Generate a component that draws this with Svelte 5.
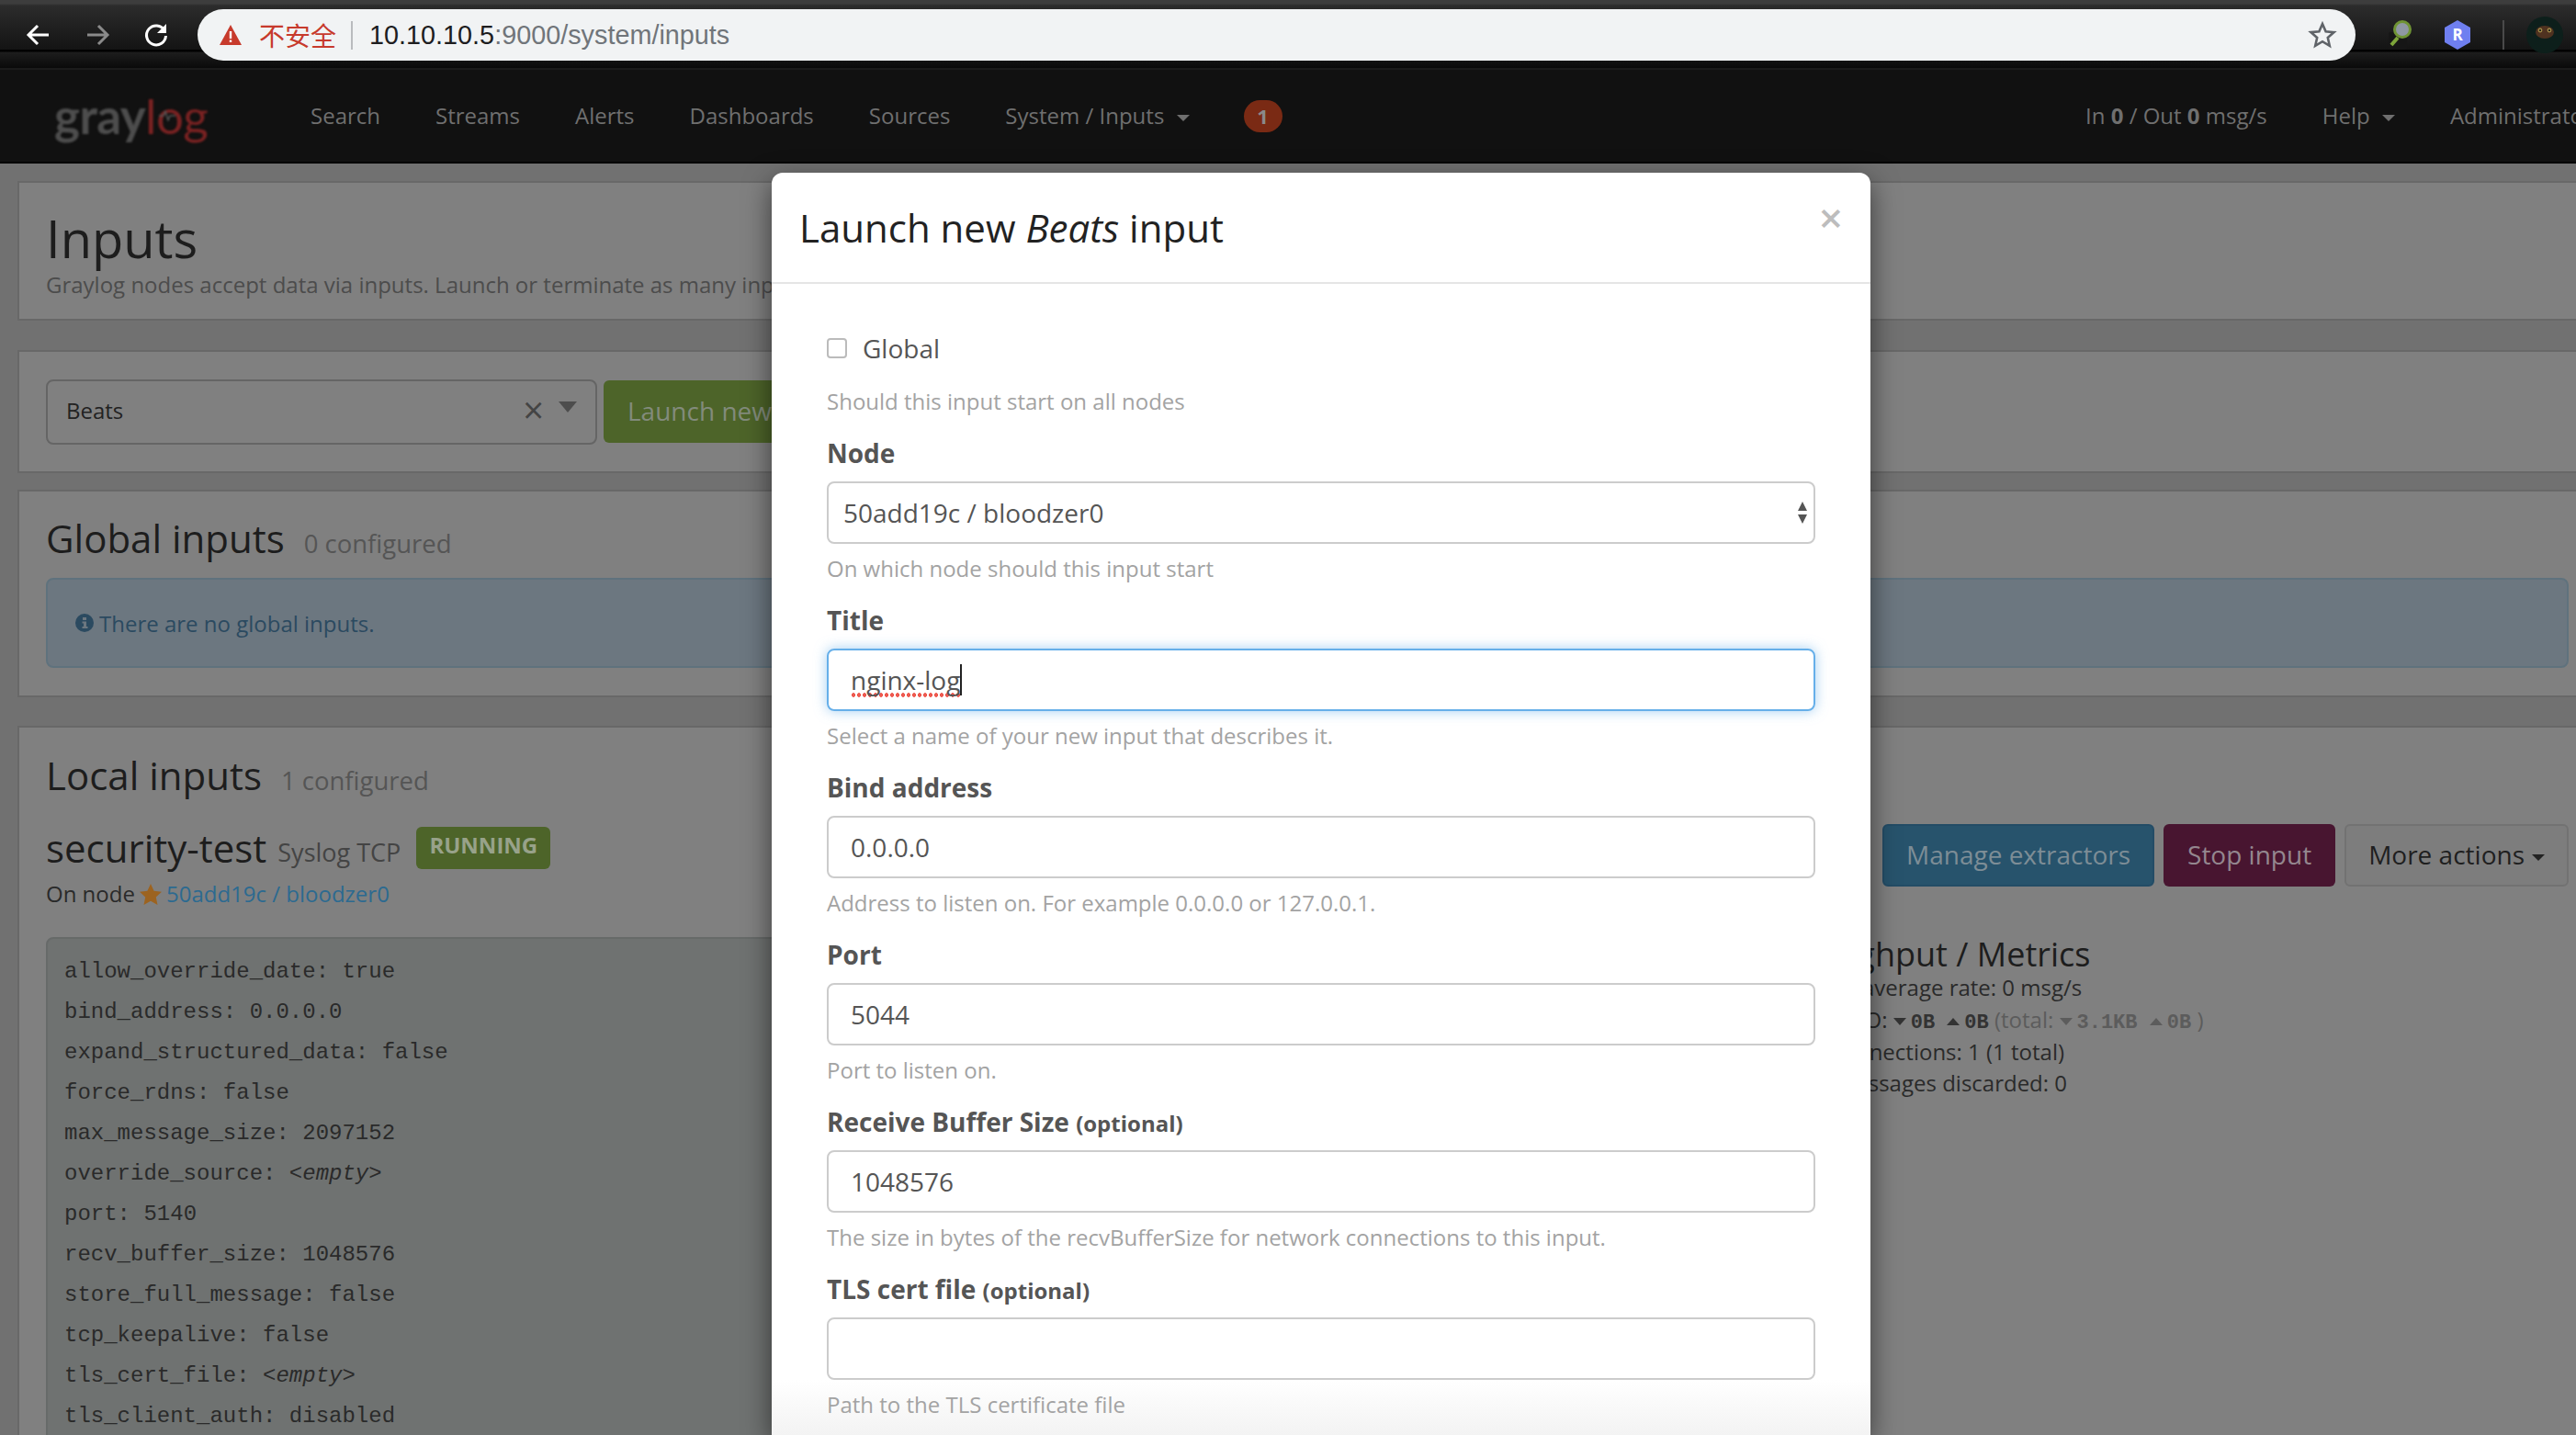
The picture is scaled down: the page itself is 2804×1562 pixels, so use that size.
<script>
  const navItems = ['Search', 'Streams', 'Alerts', 'Dashboards', 'Sources'];

  const fields = [
    { label: 'Bind address', value: '0.0.0.0', help: 'Address to listen on. For example 0.0.0.0 or 127.0.0.1.' },
    { label: 'Port', value: '5044', help: 'Port to listen on.' },
    { label: 'Receive Buffer Size', optional: true, value: '1048576', help: 'The size in bytes of the recvBufferSize for network connections to this input.' },
    { label: 'TLS cert file', optional: true, value: '', help: 'Path to the TLS certificate file' }
  ];

  const config = [
    ['allow_override_date', 'true'],
    ['bind_address', '0.0.0.0'],
    ['expand_structured_data', 'false'],
    ['force_rdns', 'false'],
    ['max_message_size', '2097152'],
    ['override_source', null],
    ['port', '5140'],
    ['recv_buffer_size', '1048576'],
    ['store_full_message', 'false'],
    ['tcp_keepalive', 'false'],
    ['tls_cert_file', null],
    ['tls_client_auth', 'disabled']
  ];
</script>

<div class="browser">
  <header class="chrome">
    <div class="nav-buttons">
      <svg width="30" height="30" viewBox="0 0 30 30"><path d="M26 15H5M14 5L4 15l10 10" fill="none" stroke="#fff" stroke-width="3" /></svg>
      <svg width="30" height="30" viewBox="0 0 30 30"><path d="M4 15h21M16 5l10 10-10 10" fill="none" stroke="#8a8a8a" stroke-width="3" /></svg>
      <svg width="30" height="30" viewBox="0 0 30 30"><path d="M24 10a10.500 10.500 0 1 0 1.500 6" fill="none" stroke="#fff" stroke-width="3" /><path d="M26 3v10H16z" fill="#fff" /></svg>
    </div>
    <div class="omnibox">
      <svg class="warn" width="26" height="24" viewBox="0 0 26 24"><path d="M13 1L25 23H1z" fill="#c73a2c" /><path d="M11.800 8h2.400v8h-2.400zM11.800 17.500h2.400v2.600h-2.400z" fill="#fff" /></svg>
      <span class="insecure">不安全</span>
      <span class="sep"></span>
      <span class="url"><b>10.10.10.5</b>:9000/system/inputs</span>
      <svg class="bookmark" width="32" height="32" viewBox="0 0 32 32"><path d="M16 4l3.600 8.300 9 .8-6.800 5.900 2 8.800L16 23.200 8.200 27.800l2-8.800-6.800-5.900 9-.8z" fill="none" stroke="#5f6368" stroke-width="2.600" /></svg>
    </div>
    <div class="extensions">
      <svg width="28" height="34" viewBox="0 0 28 34">
        <rect x="2" y="14" width="20" height="19" rx="2" fill="#161616" />
        <path d="M12 20l-7 8" stroke="#7da53a" stroke-width="4" />
        <circle cx="17" cy="11" r="8.500" fill="#8f98a3" stroke="#6f9434" stroke-width="3" />
      </svg>
      <svg width="30" height="34" viewBox="0 0 30 34"><path d="M15 1l14 8v16l-14 8-14-8V9z" fill="#6f7ff0" /><text x="15" y="23" text-anchor="middle" class="hex-letter">R</text></svg>
      <span class="ext-sep"></span>
      <svg width="40" height="40" viewBox="0 0 40 40">
        <circle cx="20" cy="20" r="20" fill="#0d1f1b" />
        <ellipse cx="20" cy="17" rx="10" ry="7" fill="#4f3220" />
        <circle cx="15" cy="15" r="2.400" fill="#a08a48" />
        <circle cx="25" cy="15" r="2.400" fill="#a08a48" />
        <circle cx="15" cy="15" r="1.100" fill="#111" />
        <circle cx="25" cy="15" r="1.100" fill="#111" />
      </svg>
    </div>
  </header>

  <div class="page">
    <nav class="navbar">
      <div class="logo">
        <span class="gray">gray</span><span class="log">log</span>
        <svg class="pulse" width="18" height="12" viewBox="0 0 18 12"><path d="M0 6h5l2-5 3 10 2-5h6" fill="none" stroke="#555" stroke-width="1.500" /></svg>
      </div>
      <ul class="nav-links">
        {#each navItems as item}
          <li>{item}</li>
        {/each}
        <li>System / Inputs <span class="caret"></span></li>
        <li><span class="badge">1</span></li>
      </ul>
      <ul class="nav-right">
        <li>In <b>0</b> / Out <b>0</b> msg/s</li>
        <li>Help <span class="caret"></span></li>
        <li>Administrator <span class="caret"></span></li>
      </ul>
    </nav>

    <main class="content">
      <section class="panel intro">
        <h1>Inputs</h1>
        <p>Graylog nodes accept data via inputs. Launch or terminate as many inputs as you want here.</p>
      </section>

      <section class="panel launcher">
        <div class="type-select">
          <span>Beats</span>
          <span class="clear">×</span>
          <span class="arrow"></span>
        </div>
        <button class="btn green">Launch new input</button>
      </section>

      <section class="panel global">
        <h2>Global inputs <small>0 configured</small></h2>
        <div class="alert">
          <svg width="20" height="20" viewBox="0 0 20 20"><circle cx="10" cy="10" r="10" fill="#2b4a60" /><path d="M8 4h4v3H8zM7.500 8.500H12V14h1.500v2h-6v-2H9v-3.500H7.500z" fill="#6c7780" /></svg>
          There are no global inputs.
        </div>
      </section>

      <section class="panel local">
        <h2>Local inputs <small>1 configured</small></h2>
        <div class="input-head">
          <div>
            <div class="input-title">
              <h3>security-test</h3>
              <span class="kind">Syslog TCP</span>
              <span class="label-running">RUNNING</span>
            </div>
            <div class="on-node">
              On node
              <svg width="24" height="23" viewBox="0 0 24 23"><path d="M12 0l3.600 7.800 8.400 1-6.200 5.800 1.700 8.400L12 18.800 4.500 23l1.700-8.400L0 8.800l8.400-1z" fill="#9c6320" /></svg>
              <a href="#top">50add19c / bloodzer0</a>
            </div>
          </div>
          <div class="actions">
            <button class="btn blue">Manage extractors</button>
            <button class="btn purple">Stop input</button>
            <button class="btn plain">More actions<span class="caret dark"></span></button>
          </div>
        </div>
        <div class="details">
          <div class="config">
            {#each config as [key, value]}
              <div class="config-line">{key}: {#if value}{value}{:else}<em>&lt;empty&gt;</em>{/if}</div>
            {/each}
          </div>
          <div class="metrics">
            <h3>Throughput / Metrics</h3>
            <ul>
              <li>1 minute average rate: 0 msg/s</li>
              <li>
                Network IO:
                <span class="mono"><i class="tri down"></i>0B <i class="tri up"></i>0B</span>
                <span class="total">(total: <span class="mono"><i class="tri down"></i>3.1KB <i class="tri up"></i>0B</span> )</span>
              </li>
              <li>Active connections: 1 (1 total)</li>
              <li>Empty messages discarded: 0</li>
            </ul>
          </div>
        </div>
      </section>
    </main>

    <div class="modal">
      <div class="modal-header">
        <h4>Launch new <em>Beats</em> input</h4>
        <span class="close">×</span>
      </div>
      <div class="modal-body">
        <div class="group">
          <label class="check"><span class="box"></span>Global</label>
          <p class="help">Should this input start on all nodes</p>
        </div>
        <div class="group">
          <div class="field-label">Node</div>
          <div class="control select">
            50add19c / bloodzer0
            <svg width="12" height="26" viewBox="0 0 12 26"><path d="M6 1l5 10H1zM6 25L1 15h10z" fill="#555" /></svg>
          </div>
          <p class="help">On which node should this input start</p>
        </div>
        <div class="group">
          <div class="field-label">Title</div>
          <div class="control focused"><span class="misspelled">nginx-log</span><span class="cursor"></span></div>
          <p class="help">Select a name of your new input that describes it.</p>
        </div>
        {#each fields as field}
          <div class="group">
            <div class="field-label">{field.label}{#if field.optional}&nbsp;<small>(optional)</small>{/if}</div>
            <div class="control">{field.value}</div>
            <p class="help">{field.help}</p>
          </div>
        {/each}
      </div>
    </div>
  </div>
</div>

<style>
  :global(body) {
    margin: 0;
    background: #717171;
  }

  .browser {
    width: 2804px;
    height: 1562px;
    display: flex;
    flex-direction: column;
    overflow: hidden;
    font-family: "Open Sans", sans-serif;
  }

  .chrome {
    flex: none;
    height: 75px;
    box-sizing: border-box;
    display: flex;
    align-items: flex-start;
    padding-top: 10px;
    background: linear-gradient(#3d3d3d 0, #3d3d3d 4px, #2c2c2c 6px, #141414 54px, #000 54px, #000 56px, #1d1d1d 57px, #0a0a0a 74px, #1b1b1b 74px);
  }

  .nav-buttons {
    width: 215px;
    height: 56px;
    box-sizing: border-box;
    padding-left: 27px;
    display: flex;
    align-items: center;
    gap: 34px;
  }

  .omnibox {
    width: 2349px;
    height: 56px;
    box-sizing: border-box;
    padding: 0 20px 0 23px;
    display: flex;
    align-items: center;
    background: #f1f3f4;
    border-radius: 28px;
  }

  .insecure {
    margin-left: 18px;
    color: #c73a2c;
    font: 28px "Noto Sans CJK SC", sans-serif;
  }

  .sep {
    width: 2px;
    height: 31px;
    margin: 0 18px 0 16px;
    background: #b9bbbe;
  }

  .url {
    flex: 1;
    color: #70757a;
    font: 28.800px "Liberation Sans", sans-serif;
  }

  .url b {
    color: #1d1d1f;
    font-weight: 400;
  }

  .extensions {
    flex: 1;
    height: 56px;
    display: flex;
    align-items: center;
    padding-left: 34px;
    gap: 34px;
  }

  .hex-letter {
    font: 700 17px "Open Sans", sans-serif;
    fill: #fff;
  }

  .ext-sep {
    width: 2px;
    height: 32px;
    margin-right: -10px;
    background: #4a4a4a;
  }

  .page {
    position: relative;
    flex: 1;
    min-height: 0;
    overflow: hidden;
    background: #717171;
  }

  .navbar {
    height: 98px;
    padding-bottom: 2px;
    width: 2900px;
    display: flex;
    align-items: center;
    background: #111;
    border-top: 1px solid #1b1b1b;
    border-bottom: 2px solid #000;
    color: #6f6f6f;
    font-size: 24px;
  }

  .logo {
    position: relative;
    width: 278px;
    padding-left: 59px;
    box-sizing: border-box;
    flex: none;
    font: 700 53px Lato, sans-serif;
    letter-spacing: -0.600px;
    filter: blur(1px);
  }

  .gray {
    color: #4d4d4d;
  }

  .log {
    color: #7a2222;
    font-weight: 400;
  }

  .pulse {
    position: absolute;
    left: 173px;
    top: 26px;
  }

  ul {
    margin: 0;
    padding: 0;
    list-style: none;
  }

  .nav-links {
    display: flex;
    align-items: center;
    gap: 60px;
    padding-left: 60px;
    flex: none;
    width: 1992px;
    box-sizing: border-box;
  }

  .nav-right {
    display: flex;
    gap: 60px;
    flex: none;
  }

  .caret {
    display: inline-block;
    margin-left: 7px;
    vertical-align: middle;
    border-top: 7px solid #6f6f6f;
    border-left: 7px solid transparent;
    border-right: 7px solid transparent;
  }

  .caret.dark {
    margin-left: 8px;
    border-top-color: #222;
  }

  .badge {
    display: block;
    width: 42px;
    height: 35px;
    border-radius: 18px;
    background: #7a2a14;
    color: #8a8a8a;
    font-weight: 700;
    font-size: 22px;
    line-height: 35px;
    text-align: center;
    margin: 2px 0 0 -1px;
  }

  .content {
    width: 2808px;
    margin-left: 19px;
    padding-top: 19px;
  }

  .panel {
    box-sizing: border-box;
    background: #808080;
    border: 2px solid #686868;
    padding: 0 29px;
    color: #1d1d1d;
  }

  .intro {
    height: 152px;
  }

  h1 {
    margin: 0;
    padding-top: 29px;
    font-size: 56px;
    font-weight: 400;
    line-height: 62px;
    color: #1d1d1d;
  }

  .intro p {
    margin: 3px 0 0;
    color: #4c4c4c;
    font-size: 24px;
    line-height: 34px;
  }

  .launcher {
    height: 134px;
    margin-top: 32px;
    display: flex;
    align-items: center;
    gap: 7px;
  }

  .type-select {
    width: 600px;
    height: 71px;
    box-sizing: border-box;
    display: flex;
    align-items: center;
    padding: 0 20px 4px;
    border: 2px solid #656565;
    border-radius: 8px;
    color: #222;
    font-size: 24px;
  }

  .type-select span:first-child {
    flex: 1;
  }

  .clear {
    font-size: 40px;
    line-height: 1;
    margin-right: 16px;
    color: #444;
  }

  .arrow {
    border-top: 12px solid #4d4d4d;
    border-left: 10px solid transparent;
    border-right: 10px solid transparent;
    margin-top: -6px;
  }

  .btn {
    height: 68px;
    box-sizing: border-box;
    padding: 0 24px 2px;
    border: 2px solid transparent;
    border-radius: 6px;
    font: 28px "Open Sans", sans-serif;
    color: #828b7c;
    white-space: nowrap;
  }

  .green {
    background: #4d6429;
  }

  .blue {
    background: #27536c;
    border-color: #234c66;
    color: #7d8d96;
  }

  .purple {
    background: #481530;
    color: #94878f;
  }

  .plain {
    background: #7d7d7d;
    border-color: #727272;
    color: #1f1f1f;
  }

  .global {
    height: 226px;
    margin-top: 18px;
  }

  h2 {
    margin: 0;
    padding-top: 21px;
    font-size: 42px;
    font-weight: 400;
    line-height: 60px;
    color: #1d1d1d;
  }

  h2 small {
    margin-left: 10px;
    font-size: 27.500px;
    color: #555;
  }

  .alert {
    display: flex;
    align-items: center;
    gap: 6px;
    height: 98px;
    margin-top: 7px;
    box-sizing: border-box;
    padding-left: 30px;
    background: #6c7780;
    border: 2px solid #5f727d;
    border-radius: 8px;
    color: #2b4a60;
    font-size: 24px;
  }

  .local {
    margin-top: 31px;
    height: 900px;
  }

  .local h2 {
    padding-top: 22px;
  }

  .input-head {
    display: flex;
    justify-content: space-between;
    align-items: flex-start;
    margin-top: 15px;
  }

  .input-title {
    display: flex;
    align-items: center;
    gap: 12px;
  }

  h3 {
    margin: 0;
    font-size: 42px;
    font-weight: 400;
    line-height: 56px;
    color: #1d1d1d;
  }

  .kind {
    font-size: 27px;
    color: #444;
    margin-top: 8px;
  }

  .label-running {
    margin-left: 5px;
    padding: 0 14px;
    height: 46px;
    box-sizing: border-box;
    background: #4d6429;
    border-radius: 6px;
    color: #98a28a;
    font-size: 24px;
    font-weight: 700;
    line-height: 40px;
    margin-top: 0;
  }

  .on-node {
    display: flex;
    align-items: center;
    gap: 5px;
    color: #2a2a2a;
    font-size: 24px;
    line-height: 36px;
    margin-top: 4px;
  }

  .on-node a {
    color: #2c6a90;
    text-decoration: none;
  }

  .actions {
    display: flex;
    gap: 10px;
    margin-top: 2px;
  }

  .details {
    display: grid;
    grid-template-columns: 1847px 1fr;
    gap: 24px;
    margin-top: 29px;
  }

  .config {
    box-sizing: border-box;
    height: 620px;
    padding: 14px 18px;
    background: #6f7271;
    border: 2px solid #676a69;
    border-radius: 8px;
    color: #2a2a2a;
    font: 24px/44px "Liberation Mono", monospace;
  }

  .config em {
    font-style: italic;
  }

  .metrics h3 {
    font-size: 36px;
    line-height: 38px;
  }

  .metrics li {
    font-size: 24px;
    line-height: 34.800px;
    color: #2a2a2a;
  }

  .mono {
    font: 700 22px "Liberation Mono", monospace;
    color: #333;
  }

  .total,
  .total .mono {
    color: #5c5c5c;
  }

  .tri {
    display: inline-block;
    margin: 0 5px 3px 0;
    border-left: 7px solid transparent;
    border-right: 7px solid transparent;
  }

  .tri.down {
    border-top: 8px solid currentColor;
  }

  .tri.up {
    border-bottom: 8px solid currentColor;
  }

  .modal {
    position: absolute;
    left: 840px;
    top: 113px;
    bottom: 0;
    width: 1196px;
    box-sizing: border-box;
    overflow: hidden;
    border-radius: 12px 12px 0 0;
    background: linear-gradient(#fff calc(100% - 60px), #f3f3f3);
    box-shadow: 0 10px 30px rgba(0, 0, 0, 0.55);
    color: #555;
  }

  .modal-header {
    position: relative;
    height: 121px;
    box-sizing: border-box;
    padding: 28px 30px 0;
    border-bottom: 2px solid #e5e5e5;
  }

  h4 {
    margin: 0;
    font-size: 42px;
    font-weight: 400;
    line-height: 64px;
    color: #222;
  }

  .close {
    position: absolute;
    right: 30px;
    top: 18px;
    font-size: 46px;
    line-height: 60px;
    font-weight: 600;
    color: #bdbdbd;
  }

  .modal-body {
    padding: 50px 60px 0;
  }

  .group {
    margin-bottom: 18px;
  }

  .check {
    display: flex;
    align-items: center;
    height: 40px;
    font-size: 28px;
    margin-bottom: 20px;
  }

  .box {
    width: 22px;
    height: 22px;
    box-sizing: border-box;
    margin-right: 17px;
    border: 2px solid #bbb;
    border-radius: 4px;
  }

  .field-label {
    height: 40px;
    margin-bottom: 11px;
    font-size: 28px;
    font-weight: 700;
    line-height: 40px;
    color: #555;
  }

  .field-label small {
    font-size: 24px;
  }

  .control {
    height: 68px;
    box-sizing: border-box;
    display: flex;
    align-items: center;
    padding: 0 24px;
    border: 2px solid #ccc;
    border-radius: 8px;
    font-size: 28px;
    color: #555;
  }

  .select {
    justify-content: space-between;
    padding: 0 6px 0 16px;
  }

  .focused {
    border-color: #66afe9;
    box-shadow: 0 0 14px rgba(102, 175, 233, 0.6);
  }

  .misspelled {
    background: radial-gradient(circle, #ee5a50 2px, transparent 2.500px) 0 100% / 6px 5px repeat-x;
  }

  .cursor {
    width: 2px;
    height: 34px;
    background: #222;
  }

  .help {
    margin: 9px 0 0;
    font-size: 24px;
    line-height: 36px;
    color: #a3a3a3;
  }
</style>
